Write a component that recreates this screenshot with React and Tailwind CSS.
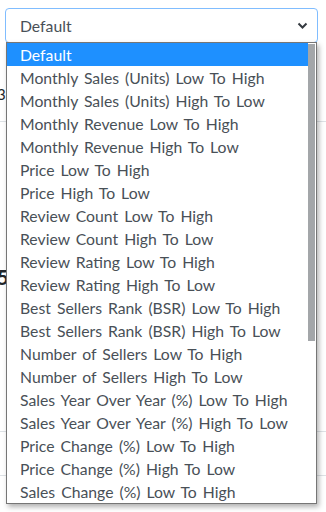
import React from "react";

const options = [
  "Default",
  "Monthly Sales (Units) Low To High",
  "Monthly Sales (Units) High To Low",
  "Monthly Revenue Low To High",
  "Monthly Revenue High To Low",
  "Price Low To High",
  "Price High To Low",
  "Review Count Low To High",
  "Review Count High To Low",
  "Review Rating Low To High",
  "Review Rating High To Low",
  "Best Sellers Rank (BSR) Low To High",
  "Best Sellers Rank (BSR) High To Low",
  "Number of Sellers Low To High",
  "Number of Sellers High To Low",
  "Sales Year Over Year (%) Low To High",
  "Sales Year Over Year (%) High To Low",
  "Price Change (%) Low To High",
  "Price Change (%) High To Low",
  "Sales Change (%) Low To High",
];

export default function App() {
  return (
    <div
      className="relative h-[512px] w-[326px] overflow-hidden bg-white text-[#495057]"
      style={{ fontFamily: "Lato, 'Open Sans', sans-serif" }}
    >
      {/* page behind the menu */}
      <div className="flex flex-col pt-[50px]">
        <div className="h-[72px] border-b border-[#dee2e6] pt-[33px] text-[15px] text-[#212529]">
          <span className="-ml-[3px]">39</span>
        </div>
        <div className="h-[140px]" />
        <div className="-ml-[3px] text-[20px] font-bold text-[#212529]">5</div>
        <div className="h-[140px] border-b border-[#dee2e6]" />
        <div className="flex h-[44px] border-b border-[#dee2e6]">
          <div className="w-[70px] border-r border-[#dee2e6]" />
          <div className="w-[135px] border-r border-[#dee2e6]" />
        </div>
      </div>

      {/* select */}
      <div className="absolute left-[5px] top-[8px] flex h-[35px] w-[313px] items-center justify-between rounded-[4px] border border-[#80bdff] bg-white pl-[14px] pr-[9px] text-[15.75px] [word-spacing:2px]">
        <span>Default</span>
        <svg width="11" height="8" viewBox="0 0 11 8" fill="none">
          <path d="M1.5 1.5 L5.5 5.5 L9.5 1.5" stroke="#343a40" strokeWidth="2" />
        </svg>
      </div>

      {/* open list */}
      <div className="absolute left-[6px] top-[42px] flex w-[311px] border border-[#767676] bg-white shadow-[2px_3px_5px_rgba(0,0,0,0.3)]">
        <div className="flex flex-1 flex-col">
          {options.map((o, i) => (
            <div
              key={o}
              className={
                "h-[23px] whitespace-nowrap pl-[13px] text-[15.75px] leading-[23px] [word-spacing:2px] " +
                (i === 0 ? "bg-[#1e90ff] text-white" : "text-[#495057]")
              }
            >
              {o}
            </div>
          ))}
        </div>
        <div className="flex w-[8px] flex-col bg-white pt-[1px]">
          <div className="h-[297px] w-[7px] bg-[#a3a6a9]" />
        </div>
      </div>
    </div>
  );
}
